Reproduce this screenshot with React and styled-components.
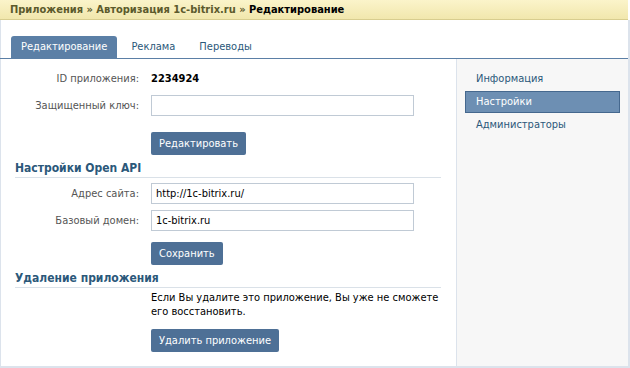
import styled, { createGlobalStyle } from "styled-components";

const GlobalStyle = createGlobalStyle`
  body {
    margin: 0;
    background: #fff;
    font-family: "DejaVu Sans Condensed", "DejaVu Sans", Tahoma, sans-serif;
    font-size: 11px;
    color: #000;
  }
`;

const Page = styled.div`
  width: 630px;
  height: 368px;
  display: flex;
  flex-direction: column;
`;

const Header = styled.div`
  height: 20px;
  box-sizing: border-box;
  padding: 3px 0 0 10px;
  margin-right: 2px;
  background: linear-gradient(#fbf4ca, #f1e7ad);
  border-bottom: 1px solid #d8cd8f;
  font-weight: bold;
  font-size: 11px;
  color: #5c5a2c;
  b {
    color: #000;
  }
`;

const Frame = styled.div`
  flex: 1;
  display: flex;
  flex-direction: column;
  border-left: 1px solid #dce3ec;
  border-right: 2px solid #dce3ec;
  border-bottom: 2px solid #dce3ec;
`;

const Tabs = styled.div`
  display: flex;
  align-items: flex-end;
  margin-top: 16px;
  margin-left: -1px;
  padding-left: 11px;
  border-bottom: 1px solid #5b7fa6;
`;

const Tab = styled.div`
  height: 22px;
  line-height: 22px;
  padding: 0 10px;
  margin-right: 4px;
  border-radius: 3px 3px 0 0;
  color: ${({ active }) => (active ? "#fff" : "#2b587a")};
  background: ${({ active }) => (active ? "#5b7fa6" : "transparent")};
`;

const Body = styled.div`
  flex: 1;
  display: flex;
`;

const Main = styled.div`
  flex: 1;
  display: flex;
  flex-direction: column;
  padding: 9px 15px 0 14px;
`;

const Side = styled.div`
  width: 172px;
  box-sizing: border-box;
  border-left: 1px solid #dce3ec;
  background: #f7f7f7;
  padding: 9px 8px 0 8px;
`;

const SideItem = styled.div`
  height: 22px;
  line-height: 20px;
  padding-left: 10px;
  margin-bottom: 1px;
  box-sizing: border-box;
  color: ${({ active }) => (active ? "#fff" : "#2b587a")};
  background: ${({ active }) => (active ? "#6d8fb3" : "transparent")};
  border: 1px solid ${({ active }) => (active ? "#45688e" : "transparent")};
`;

const Row = styled.div`
  display: flex;
  align-items: center;
  height: 21px;
  margin-bottom: 6px;
`;

const Label = styled.div`
  width: 124px;
  padding-right: 12px;
  text-align: right;
  color: #555;
`;

const Value = styled.div`
  font-weight: ${({ bold }) => (bold ? "bold" : "normal")};
`;

const Input = styled.input`
  width: 263px;
  height: 21px;
  box-sizing: border-box;
  border: 1px solid #c0cad5;
  padding: 0 4px;
  font-family: inherit;
  font-size: 11px;
  color: #000;
  outline: none;
`;

const Actions = styled.div`
  display: flex;
  padding-left: 136px;
  margin-top: ${({ top }) => top}px;
`;

const Button = styled.button`
  height: 23px;
  padding: 0 8px;
  border: none;
  border-radius: 2px;
  background: #4e7096;
  color: #fff;
  font-family: inherit;
  font-size: 11px;
  cursor: pointer;
`;

const Section = styled.div`
  margin-top: 6px;
  margin-bottom: ${({ bottom }) => bottom}px;
  padding-bottom: 1px;
  line-height: 15px;
  border-bottom: 1px solid #dae1e8;
  font-size: 12px;
  font-weight: bold;
  color: #2b587a;
`;

const Note = styled.div`
  padding-left: 136px;
  line-height: 14px;
`;

export default function App() {
  return (
    <Page>
      <GlobalStyle />
      <Header>
        Приложения » Авторизация 1c-bitrix.ru » <b>Редактирование</b>
      </Header>
      <Frame>
        <Tabs>
          <Tab active>Редактирование</Tab>
          <Tab>Реклама</Tab>
          <Tab>Переводы</Tab>
        </Tabs>
        <Body>
          <Main>
            <Row>
              <Label>ID приложения:</Label>
              <Value bold>2234924</Value>
            </Row>
            <Row>
              <Label>Защищенный ключ:</Label>
              <Input defaultValue="" />
            </Row>
            <Actions top={10}>
              <Button>Редактировать</Button>
            </Actions>
            <Section bottom={5}>Настройки Open API</Section>
            <Row>
              <Label>Адрес сайта:</Label>
              <Input defaultValue="http://1c-bitrix.ru/" />
            </Row>
            <Row>
              <Label>Базовый домен:</Label>
              <Input defaultValue="1c-bitrix.ru" />
            </Row>
            <Actions top={5}>
              <Button>Сохранить</Button>
            </Actions>
            <Section bottom={3}>Удаление приложения</Section>
            <Note>
              Если Вы удалите это приложение, Вы уже не сможете
              <br />
              его восстановить.
            </Note>
            <Actions top={10}>
              <Button>Удалить приложение</Button>
            </Actions>
          </Main>
          <Side>
            <SideItem>Информация</SideItem>
            <SideItem active>Настройки</SideItem>
            <SideItem>Администраторы</SideItem>
          </Side>
        </Body>
      </Frame>
    </Page>
  );
}
